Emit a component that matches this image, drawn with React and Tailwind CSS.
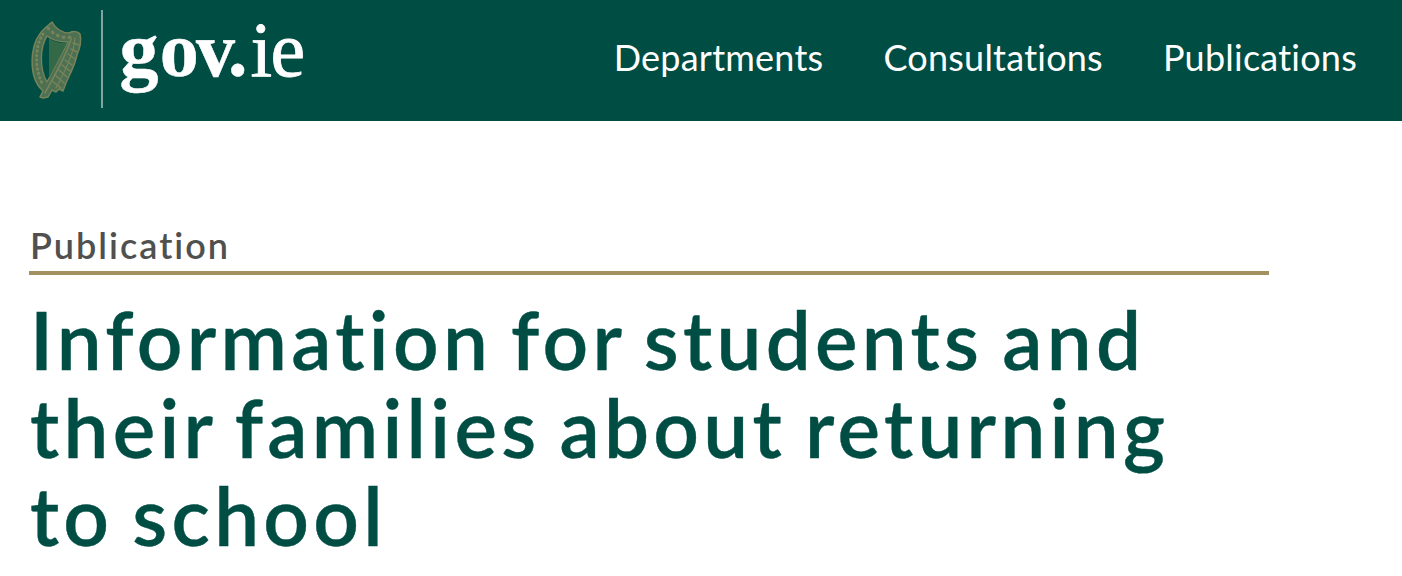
import React from "react";

const navItems = ["Departments", "Consultations", "Publications"];

function Logo() {
  return (
    <svg className="h-[121px] w-[290px]" viewBox="28 0 290 121" role="img" aria-label="gov.ie">
      {/* Harp */}
      <g fill="none" stroke="#77845a" strokeLinejoin="round" strokeLinecap="round">
        <path d="M45 28 L52 22 C55 28 62 33 69 33 C73 31 78 31 80 34 C82 42 80 48 77 55 C75 65 69 76 66 83 L63 91 L59 89 L56 92 L52 90 L48 97 L43 98 L40 97 L43 91 C34 83 31 70 32.5 54 C34 43 38 34 45 28 Z" fill="#4d7053" strokeWidth="1.5" />
        <path d="M47 36 C40 47 39 68 47 82 L68 42 C60 42 52 40 47 36 Z" fill="#004d44" strokeWidth="1.4" />
        <path d="M49 38 V78 L67 43 C59 43 54 42 49 38 Z" fill="#346947" stroke="none" />
        <path d="M43 34 C35 45 34 69 43 85" strokeWidth="3" strokeDasharray="0.5 4" />
        <path d="M48 28 C54 35 62 39 72 37" strokeWidth="3" strokeDasharray="1 5" />
        <path d="M71 39 C67 54 56 73 45 93" strokeWidth="1.6" />
        <path d="M75 38 C74 54 64 73 56 88" strokeWidth="1.2" />
        <path d="M71 49 L77 52 M68 54 L75 59 M65 60 L72 65 M62 65 L70 71 M59 70 L67 77 M55 75 L64 83 M52 81 L61 88 M73 43 L79 45" strokeWidth="1.5" />
      </g>
      <rect x="101" y="10" width="2" height="98" fill="#7fa6a1" />
      <g fill="#fff" stroke="#fff" fontFamily="'Liberation Serif', serif" fontSize="78">
        <text x="119.5 159.7 196 228" y="76" fontWeight="700" strokeWidth="0.5">gov.</text>
        <text x="250.5 270.5" y="76" strokeWidth="0.8">ie</text>
      </g>
    </svg>
  );
}

export default function App() {
  return (
    <div className="min-h-screen bg-white font-['Lato',sans-serif]">
      <header className="flex h-[121px] items-start justify-between bg-[#004d44] pl-[28px] pr-[45px]">
        <Logo />
        <nav className="flex gap-[60px] pt-[35px] text-[36px] leading-[44px] tracking-[0.23px] text-white">
          {navItems.map((item) => (
            <a key={item} href="#">{item}</a>
          ))}
        </nav>
      </header>
      <main className="pl-[29px] pt-[102px]">
        <div className="w-[1240px] border-b-4 border-[#a39161] pb-1 pl-px text-[36px] leading-[44px] font-semibold tracking-[2px] text-[#50504f]">
          Publication
        </div>
        <h1 className="mt-[20px] w-[1200px] pl-px text-[80px] leading-[88px] font-semibold tracking-[4.3px] [word-spacing:-5.2px] text-[#004d44] [-webkit-text-stroke:0.4px_#004d44]">
          Information for students and their families about returning to school
        </h1>
      </main>
    </div>
  );
}
